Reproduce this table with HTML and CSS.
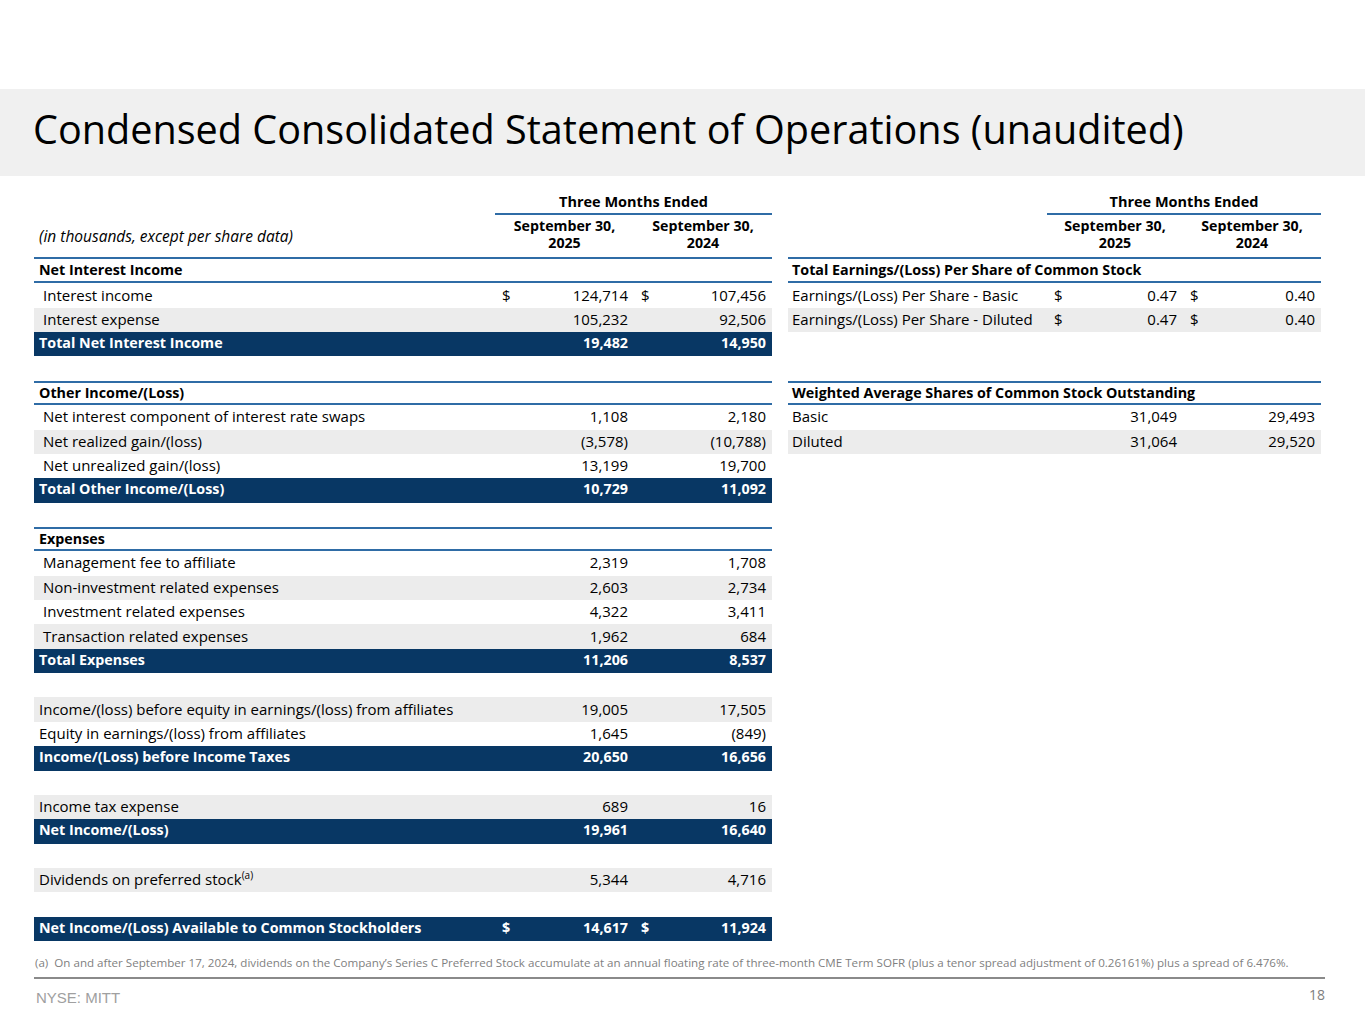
FILE: index.html
```html
<!DOCTYPE html>
<html lang="en">
<head>
<meta charset="utf-8">
<title>Condensed Consolidated Statement of Operations (unaudited)</title>
<link rel="stylesheet" href="styles.css">
</head>
<body>
<header class="band">
  <h1 class="title">Condensed Consolidated Statement of Operations (unaudited)</h1>
</header>

<main class="content">
  <section class="stmt stmt-left">
    <div class="hdr">
      <div class="hdr-label"><span class="units">(in thousands, except per share data)</span></div>
      <div class="hdr-period">
        <div class="period-title">Three Months Ended</div>
        <div class="period-dates">
          <div class="date"><div>September 30,</div><div>2025</div></div>
          <div class="date"><div>September 30,</div><div>2024</div></div>
        </div>
      </div>
    </div>

    <div class="row sec"><div class="lbl">Net Interest Income</div><div class="val"></div><div class="val"></div></div>
    <div class="row"><div class="lbl sub">Interest income</div><div class="val"><span>$</span><span>124,714</span></div><div class="val"><span>$</span><span>107,456</span></div></div>
    <div class="row alt"><div class="lbl sub">Interest expense</div><div class="val"><span></span><span>105,232</span></div><div class="val"><span></span><span>92,506</span></div></div>
    <div class="row total"><div class="lbl">Total Net Interest Income</div><div class="val"><span></span><span>19,482</span></div><div class="val"><span></span><span>14,950</span></div></div>
    <div class="row gap"></div>

    <div class="row sec"><div class="lbl">Other Income/(Loss)</div><div class="val"></div><div class="val"></div></div>
    <div class="row"><div class="lbl sub">Net interest component of interest rate swaps</div><div class="val"><span></span><span>1,108</span></div><div class="val"><span></span><span>2,180</span></div></div>
    <div class="row alt"><div class="lbl sub">Net realized gain/(loss)</div><div class="val"><span></span><span>(3,578)</span></div><div class="val"><span></span><span>(10,788)</span></div></div>
    <div class="row"><div class="lbl sub">Net unrealized gain/(loss)</div><div class="val"><span></span><span>13,199</span></div><div class="val"><span></span><span>19,700</span></div></div>
    <div class="row total"><div class="lbl">Total Other Income/(Loss)</div><div class="val"><span></span><span>10,729</span></div><div class="val"><span></span><span>11,092</span></div></div>
    <div class="row gap"></div>

    <div class="row sec"><div class="lbl">Expenses</div><div class="val"></div><div class="val"></div></div>
    <div class="row"><div class="lbl sub">Management fee to affiliate</div><div class="val"><span></span><span>2,319</span></div><div class="val"><span></span><span>1,708</span></div></div>
    <div class="row alt"><div class="lbl sub">Non-investment related expenses</div><div class="val"><span></span><span>2,603</span></div><div class="val"><span></span><span>2,734</span></div></div>
    <div class="row"><div class="lbl sub">Investment related expenses</div><div class="val"><span></span><span>4,322</span></div><div class="val"><span></span><span>3,411</span></div></div>
    <div class="row alt"><div class="lbl sub">Transaction related expenses</div><div class="val"><span></span><span>1,962</span></div><div class="val"><span></span><span>684</span></div></div>
    <div class="row total"><div class="lbl">Total Expenses</div><div class="val"><span></span><span>11,206</span></div><div class="val"><span></span><span>8,537</span></div></div>
    <div class="row gap"></div>

    <div class="row alt"><div class="lbl">Income/(loss) before equity in earnings/(loss) from affiliates</div><div class="val"><span></span><span>19,005</span></div><div class="val"><span></span><span>17,505</span></div></div>
    <div class="row"><div class="lbl">Equity in earnings/(loss) from affiliates</div><div class="val"><span></span><span>1,645</span></div><div class="val"><span></span><span>(849)</span></div></div>
    <div class="row total"><div class="lbl">Income/(Loss) before Income Taxes</div><div class="val"><span></span><span>20,650</span></div><div class="val"><span></span><span>16,656</span></div></div>
    <div class="row gap"></div>

    <div class="row alt"><div class="lbl">Income tax expense</div><div class="val"><span></span><span>689</span></div><div class="val"><span></span><span>16</span></div></div>
    <div class="row total"><div class="lbl">Net Income/(Loss)</div><div class="val"><span></span><span>19,961</span></div><div class="val"><span></span><span>16,640</span></div></div>
    <div class="row gap"></div>

    <div class="row alt"><div class="lbl">Dividends on preferred stock<sup>(a)</sup></div><div class="val"><span></span><span>5,344</span></div><div class="val"><span></span><span>4,716</span></div></div>
    <div class="row gap"></div>

    <div class="row total"><div class="lbl">Net Income/(Loss) Available to Common Stockholders</div><div class="val"><span>$</span><span>14,617</span></div><div class="val"><span>$</span><span>11,924</span></div></div>
  </section>

  <section class="stmt stmt-right">
    <div class="hdr">
      <div class="hdr-label"></div>
      <div class="hdr-period">
        <div class="period-title">Three Months Ended</div>
        <div class="period-dates">
          <div class="date"><div>September 30,</div><div>2025</div></div>
          <div class="date"><div>September 30,</div><div>2024</div></div>
        </div>
      </div>
    </div>

    <div class="row sec"><div class="lbl wide">Total Earnings/(Loss) Per Share of Common Stock</div></div>
    <div class="row"><div class="lbl">Earnings/(Loss) Per Share - Basic</div><div class="val"><span>$</span><span>0.47</span></div><div class="val"><span>$</span><span>0.40</span></div></div>
    <div class="row alt"><div class="lbl">Earnings/(Loss) Per Share - Diluted</div><div class="val"><span>$</span><span>0.47</span></div><div class="val"><span>$</span><span>0.40</span></div></div>
    <div class="row gap"></div>
    <div class="row gap"></div>

    <div class="row sec"><div class="lbl wide">Weighted Average Shares of Common Stock Outstanding</div></div>
    <div class="row"><div class="lbl">Basic</div><div class="val"><span></span><span>31,049</span></div><div class="val"><span></span><span>29,493</span></div></div>
    <div class="row alt"><div class="lbl">Diluted</div><div class="val"><span></span><span>31,064</span></div><div class="val"><span></span><span>29,520</span></div></div>
  </section>
</main>

<p class="footnote">(a)&nbsp; On and after September 17, 2024, dividends on the Company’s Series C Preferred Stock accumulate at an annual floating rate of three-month CME Term SOFR (plus a tenor spread adjustment of 0.26161%) plus a spread of 6.476%.</p>

<footer class="footer">
  <span class="ticker">NYSE: MITT</span>
  <span class="page">18</span>
</footer>
</body>
</html>
```

FILE: styles.css
```css
* { box-sizing: border-box; }

html, body {
  margin: 0;
  padding: 0;
  background: #ffffff;
}

body {
  width: 1365px;
  height: 1024px;
  overflow: hidden;
  font-family: "Open Sans", Lato, sans-serif;
  color: #000000;
}

.band {
  margin-top: 89px;
  height: 87px;
  background: #f0f0f0;
  display: flex;
  align-items: center;
  padding: 0 0 5px 33px;
}

.title {
  margin: 0;
  font-weight: 400;
  font-size: 39.6px;
  line-height: 1;
  letter-spacing: 0;
  color: #000000;
}

.content {
  display: flex;
  gap: 16px;
  padding-left: 34px;
  margin-top: 15px;
}

.stmt-left { width: 738px; --c0: 461px; --c1: 139px; --c2: 138px; }
.stmt-right { width: 533px; --c0: 259px; --c1: 136px; --c2: 138px; }

.hdr {
  display: grid;
  grid-template-columns: var(--c0) calc(var(--c1) + var(--c2));
  border-bottom: 2px solid #2f6ca6;
}

.hdr-label {
  display: flex;
  align-items: flex-end;
  padding: 0 0 10px 5px;
}

.units {
  font-style: italic;
  font-size: 15.5px;
}

.period-title {
  height: 24px;
  border-bottom: 2px solid #2f6ca6;
  text-align: center;
  font-weight: 700;
  font-size: 14.5px;
  line-height: 22px;
}

.period-dates {
  display: grid;
  grid-template-columns: var(--c1) var(--c2);
  height: 42px;
  padding-top: 2px;
}

.date {
  text-align: center;
  font-weight: 700;
  font-size: 14.2px;
  line-height: 17px;
}

.row {
  display: grid;
  grid-template-columns: var(--c0) var(--c1) var(--c2);
  height: 24.37px;
  font-size: 15px;
  line-height: 18px;
  align-items: center;
  padding-bottom: 2px;
}

.row.alt { background: #ececec; }

.row.total {
  background: #083764;
  color: #ffffff;
  font-weight: 700;
  font-size: 14.3px;
}

.row.sec {
  font-weight: 700;
  font-size: 14.3px;
  border-bottom: 2px solid #2f6ca6;
  padding-bottom: 0;
}

.row.gap + .row.sec {
  border-top: 2px solid #2f6ca6;
}

.lbl {
  padding-left: 5px;
  white-space: nowrap;
}

.lbl.sub { padding-left: 9px; }

.lbl.wide { grid-column: 1 / 4; }

.stmt-right .lbl { padding-left: 4px; }

.lbl sup {
  font-size: 10px;
  line-height: 0;
}

.val {
  display: flex;
  justify-content: space-between;
  padding: 0 6px 0 7px;
  white-space: nowrap;
}

.footnote {
  margin: 14px 0 0 35px;
  font-size: 11.6px;
  color: #7f7f7f;
  line-height: 16px;
  white-space: nowrap;
}

.footer {
  margin: 6px 40px 0 34px;
  border-top: 2px solid #8a8a8a;
  display: flex;
  justify-content: space-between;
  align-items: flex-start;
  padding-top: 6px;
}

.ticker {
  font-family: "Liberation Sans", Arial, sans-serif;
  font-size: 15px;
  color: #a0a0a0;
  padding-left: 2px;
  padding-top: 4px;
}

.page {
  font-size: 14px;
  color: #808080;
}
```
